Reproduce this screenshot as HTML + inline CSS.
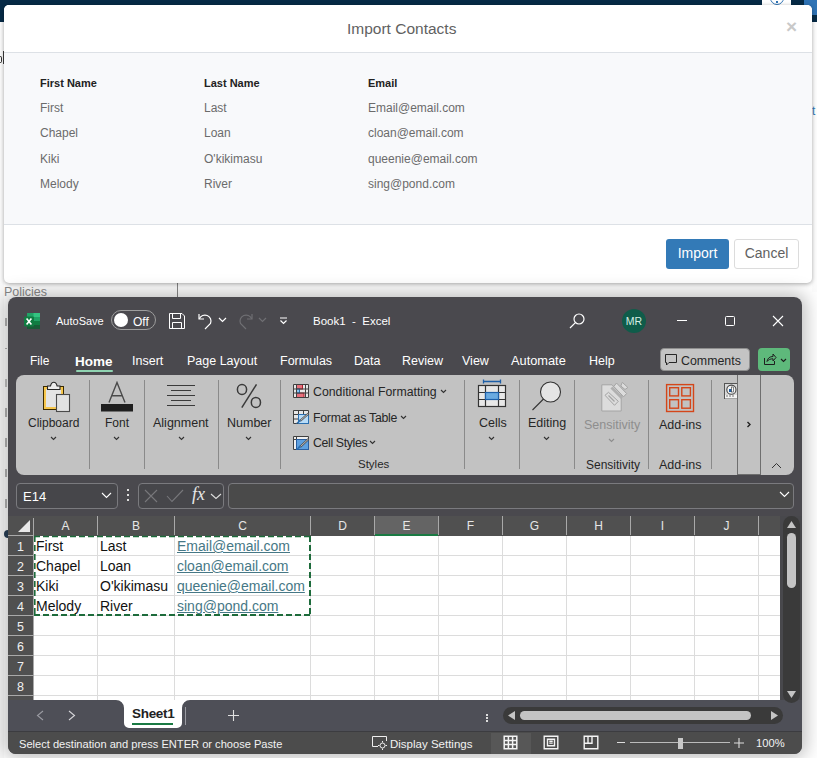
<!DOCTYPE html>
<html><head><meta charset="utf-8">
<style>
*{box-sizing:border-box;margin:0;padding:0}
html,body{width:817px;height:758px;overflow:hidden;background:#fff;font-family:"Liberation Sans",sans-serif;position:relative}
.a{position:absolute;white-space:nowrap}
/* page beneath */
#topbar{left:0;top:0;width:817px;height:22px;background:#062a46}
/* modal */
#modal{left:4px;top:5px;width:808px;height:278px;background:#fff;border-radius:5px;box-shadow:0 1px 4px rgba(0,0,0,.35);overflow:hidden}
#mhead{left:0;top:0;width:808px;height:48px;border-bottom:1px solid #dde1e6;background:#fff}
#mbody{left:0;top:48px;width:808px;height:172px;background:#f8f9fb;border-bottom:1px solid #dde1e6}
.th{font-size:11px;font-weight:bold;color:#222}
.td{font-size:12px;color:#6b6b6b}
.btn{border-radius:3px;font-size:14px;text-align:center;line-height:30px;height:30px}
/* excel */
#xl{left:8px;top:297px;width:794px;height:457px;background:#4a494e;border-radius:8px;overflow:hidden;box-shadow:0 2px 10px rgba(0,0,0,.25)}
.w{color:#fff}
.tab{font-size:12.5px;color:#fff;top:54px}
.rib{color:#262626;font-size:12px}
.sep{width:1px;background:#8a8a8a}
.chev{width:5px;height:5px;border-right:1.2px solid #333;border-bottom:1.2px solid #333;transform:rotate(45deg)}
.colh{top:219px;height:19px;background:#505050;color:#e8e8e8;font-size:12px;text-align:center;line-height:19px;border-right:1px solid #9a9a9a}
.rowh{left:0;width:25px;height:20px;background:#505050;color:#e8e8e8;font-size:12px;text-align:center;line-height:20px;border-bottom:1px solid #9a9a9a}
.cell{font-size:14px;color:#111;line-height:16px}
.lnk{color:#467886;text-decoration:underline}
</style></head><body>
<div id="topbar" class="a"></div>
<div class="a" style="left:762px;top:0;width:29px;height:5px;background:#fff"></div>
<div class="a" style="left:804px;top:0;width:13px;height:15px;background:#2f73b5"></div>
<div class="a" style="left:770px;top:-9px;width:14px;height:14px;border:1.5px solid #2f73b5;border-radius:7px"></div><div class="a" style="left:776px;top:1px;width:2px;height:2px;background:#2f73b5"></div>
<div class="a" style="left:0;top:22px;width:4px;height:736px;background:#fafafa"></div><div class="a" style="left:0;top:56px;width:2px;height:7px;border:1px solid #333;border-left:none;border-radius:0 3px 3px 0"></div>
<div class="a" style="left:812px;top:22px;width:5px;height:270px;background:#fcfcfc"></div>
<div class="a" style="left:812px;top:104px;font-size:12px;color:#337ab7">t</div>
<div class="a" style="left:5px;top:318px;width:2px;height:8px;background:#b4b4b4"></div><div class="a" style="left:5px;top:408px;width:2px;height:9px;background:#b4b4b4"></div><div class="a" style="left:5px;top:438px;width:2px;height:9px;background:#b4b4b4"></div><div class="a" style="left:5px;top:469px;width:2px;height:8px;background:#b4b4b4"></div><div class="a" style="left:5px;top:499px;width:2px;height:9px;background:#b4b4b4"></div><div class="a" style="left:5px;top:348px;width:2px;height:1px;background:#b4b4b4"></div><div class="a" style="left:5px;top:379px;width:2px;height:8px;background:#c4c4c4"></div><div class="a" style="left:4px;top:530px;width:5px;height:8px;border-radius:4px 0 0 4px;background:#2a4058"></div><div class="a" style="left:4px;top:285px;font-size:12.5px;color:#8a8a8a">Policies</div>
<div class="a" style="left:177px;top:283px;width:1px;height:15px;background:#888"></div>

<div id="modal" class="a">
  <div id="mhead" class="a">
    <div class="a" style="left:343px;top:15px;font-size:15.5px;color:#616161">Import Contacts</div>
    <div class="a" style="left:782px;top:11px;font-size:19px;font-weight:bold;color:#c9c9c9">×</div>
  </div>
  <div id="mbody" class="a">
    <div class="a th" style="left:36px;top:24px">First Name</div>
    <div class="a th" style="left:200px;top:24px">Last Name</div>
    <div class="a th" style="left:364px;top:24px">Email</div>
    <div class="a td" style="left:36px;top:48px">First</div>
    <div class="a td" style="left:200px;top:48px">Last</div>
    <div class="a td" style="left:364px;top:48px">Email@email.com</div>
    <div class="a td" style="left:36px;top:73px">Chapel</div>
    <div class="a td" style="left:200px;top:73px">Loan</div>
    <div class="a td" style="left:364px;top:73px">cloan@email.com</div>
    <div class="a td" style="left:36px;top:99px">Kiki</div>
    <div class="a td" style="left:200px;top:99px">O'kikimasu</div>
    <div class="a td" style="left:364px;top:99px">queenie@email.com</div>
    <div class="a td" style="left:36px;top:124px">Melody</div>
    <div class="a td" style="left:200px;top:124px">River</div>
    <div class="a td" style="left:364px;top:124px">sing@pond.com</div>
  </div>
  <div class="a btn" style="left:662px;top:234px;width:63px;background:#337ab7;color:#fff;line-height:28px">Import</div>
  <div class="a btn" style="left:730px;top:234px;width:65px;background:#fff;border:1px solid #dcdcdc;color:#616161;line-height:27px">Cancel</div>
</div>


<div class="a" style="left:3px;top:51px;width:1px;height:13px;background:#333"></div>
<div class="a" style="left:8px;top:297px;width:794px;height:457px;border-radius:8px;box-shadow:0 0 18px 4px rgba(0,0,0,.26)"></div>
<div id="xw" class="a" style="left:0;top:0;width:817px;height:758px;clip-path:inset(297px 15px 4px 8px round 8px);background:#4a494e">
  <!-- title bar -->
  <svg class="a" style="left:24px;top:313px" width="16" height="16" viewBox="0 0 16 16">
    <rect x="3" y="0" width="13" height="16" fill="#21a366"/>
    <rect x="9.5" y="0" width="6.5" height="4" fill="#33c481"/>
    <rect x="3" y="8" width="13" height="4" fill="#107c41"/>
    <rect x="3" y="12" width="13" height="4" fill="#185c37"/>
    <rect x="0" y="3.5" width="10" height="10" rx="1" fill="#107c41"/>
    <path d="M2.6 5.6 L7.4 11.4 M7.4 5.6 L2.6 11.4" stroke="#fff" stroke-width="1.6"/>
  </svg>
  <div class="a w" style="left:56px;top:315px;font-size:11px">AutoSave</div>
  <div class="a" style="left:111px;top:310px;width:45px;height:20px;border:1px solid #9d9d9d;border-radius:10px"></div>
  <div class="a" style="left:114px;top:313px;width:14px;height:14px;border-radius:7px;background:#fff"></div>
  <div class="a w" style="left:133px;top:315px;font-size:12px">Off</div>
  <svg class="a" style="left:169px;top:313px" width="16" height="16" viewBox="0 0 16 16" fill="none" stroke="#fff" stroke-width="1">
    <path d="M0.5 0.5 H13 L15.5 3 V15.5 H0.5 Z"/><path d="M3.5 0.5 V5.5 H11.5 V0.5"/><path d="M3.5 15.5 V9.5 H12.5 V15.5"/>
  </svg>
  <svg class="a" style="left:197px;top:312px" width="18" height="18" viewBox="0 0 18 18" fill="none" stroke="#fff" stroke-width="1.2">
    <path d="M2 2 V7 H7"/><path d="M2.3 6.8 A6 6 0 1 1 13.5 11.5 L8 17"/>
  </svg>
  <svg class="a" style="left:218px;top:317px" width="9" height="6" viewBox="0 0 9 6" fill="none" stroke="#fff" stroke-width="1.2"><path d="M1 1 L4.5 4.5 L8 1"/></svg>
  <svg class="a" style="left:236px;top:312px" width="18" height="18" viewBox="0 0 18 18" fill="none" stroke="#6f6f73" stroke-width="1.2">
    <path d="M16 2 V7 H11"/><path d="M15.7 6.8 A6 6 0 1 0 4.5 11.5 L10 17"/>
  </svg>
  <svg class="a" style="left:258px;top:317px" width="9" height="6" viewBox="0 0 9 6" fill="none" stroke="#6f6f73" stroke-width="1.2"><path d="M1 1 L4.5 4.5 L8 1"/></svg>
  <svg class="a" style="left:279px;top:317px" width="9" height="8" viewBox="0 0 9 8" fill="none" stroke="#fff" stroke-width="1.2"><path d="M1 1 H8"/><path d="M1.5 3.5 L4.5 6.5 L7.5 3.5"/></svg>
  <div class="a w" style="left:313px;top:315px;font-size:11.5px;white-space:pre">Book1  -  Excel</div>
  <svg class="a" style="left:569px;top:313px" width="16" height="16" viewBox="0 0 16 16" fill="none" stroke="#fff" stroke-width="1.2">
    <circle cx="10" cy="6" r="5"/><path d="M6.4 9.6 L1 15"/>
  </svg>
  <div class="a" style="left:622px;top:309px;width:24px;height:24px;border-radius:12px;background:#0f5c4a;color:#d6efe4;font-size:10.5px;text-align:center;line-height:24px">MR</div>
  <div class="a" style="left:677px;top:320px;width:10px;height:1px;background:#fff"></div>
  <div class="a" style="left:725px;top:316px;width:10px;height:10px;border:1px solid #fff;border-radius:1.5px"></div>
  <svg class="a" style="left:772px;top:315px" width="12" height="12" viewBox="0 0 12 12" stroke="#fff" stroke-width="1.1"><path d="M1 1 L11 11 M11 1 L1 11"/></svg>
  <!-- tabs -->
  <div class="a tab" style="left:30px;top:354px;font-size:12px">File</div>
  <div class="a tab" style="left:75px;top:354px;font-size:13.5px;font-weight:bold">Home</div>
  <div class="a" style="left:76px;top:370px;width:37px;height:2px;background:#90d4b2;border-radius:1px"></div>
  <div class="a tab" style="left:132px;top:354px;font-size:12.5px">Insert</div>
  <div class="a tab" style="left:187px;top:354px;font-size:12.5px">Page Layout</div>
  <div class="a tab" style="left:280px;top:354px;font-size:12.5px">Formulas</div>
  <div class="a tab" style="left:354px;top:354px;font-size:12.5px">Data</div>
  <div class="a tab" style="left:402px;top:354px;font-size:12.5px">Review</div>
  <div class="a tab" style="left:462px;top:354px;font-size:12.5px">View</div>
  <div class="a tab" style="left:511px;top:353px;font-size:12.8px">Automate</div>
  <div class="a tab" style="left:589px;top:354px;font-size:12.5px">Help</div>
  <div class="a" style="left:660px;top:348px;width:90px;height:23px;background:#c4c4c4;border:1px solid #8e8e8e;border-radius:4px"></div>
  <svg class="a" style="left:664px;top:353px" width="14" height="14" viewBox="0 0 14 14" fill="none" stroke="#262626" stroke-width="1"><path d="M1.5 1.5 H12.5 V9.5 H5 L2.5 12 V9.5 H1.5 Z"/></svg>
  <div class="a" style="left:681px;top:354px;font-size:12.4px;color:#262626">Comments</div>
  <div class="a" style="left:758px;top:348px;width:32px;height:23px;background:#5eb97b;border-radius:4px"></div>
  <svg class="a" style="left:763px;top:352px" width="14" height="14" viewBox="0 0 14 14" fill="none" stroke="#1e1e1e" stroke-width="1"><path d="M1.5 6 V12.5 H11.5 V9"/><path d="M4 9.5 C4.5 6 7 4.5 10 4.5 V2 L13 5.5 L10 9 V6.8 C7.5 6.8 5.5 7.5 4 9.5 Z"/></svg>
  <svg class="a" style="left:780px;top:358px" width="7" height="5" viewBox="0 0 7 5" fill="none" stroke="#1e1e1e" stroke-width="1.1"><path d="M1 1 L3.5 3.5 L6 1"/></svg>
  <!-- ribbon -->
  <div class="a" style="left:16px;top:375px;width:778px;height:100px;background:#c2c2c2;border-radius:8px"></div>
  <!-- clipboard -->
  <svg class="a" style="left:42px;top:381px" width="30" height="32" viewBox="0 0 30 32">
    <rect x="1.5" y="5.5" width="20" height="23" fill="#f6c64c" stroke="#3a2a00" stroke-width="1"/>
    <rect x="4" y="8" width="15" height="18" fill="#e4e4e4"/>
    <path d="M5.5 8.5 V5 H8.5 C9 3 10 1.3 11.8 1.3 C13.6 1.3 14.6 3 15.1 5 H18 V8.5 Z" fill="#ececec" stroke="#262626" stroke-width="1.1"/>
    <rect x="14.5" y="13.5" width="13" height="17" fill="#e2e2e2" stroke="#4a4a4a" stroke-width="1.1"/>
  </svg>
  <div class="a rib" style="left:28px;top:416px">Clipboard</div>
  <svg class="a" style="left:50px;top:436px" width="7" height="5" viewBox="0 0 7 5" fill="none" stroke="#333" stroke-width="1.1"><path d="M1 1 L3.5 3.5 L6 1"/></svg>
  <div class="a sep" style="left:89px;top:380px;height:89px"></div>
  <!-- font -->
  <svg class="a" style="left:100px;top:381px" width="34" height="31" viewBox="0 0 34 31">
    <path d="M9 21.5 L17 1.5 L25 21.5 M12.2 14.7 H21.8" fill="none" stroke="#4a4a4a" stroke-width="1.4"/>
    <rect x="1" y="23" width="32" height="7.5" fill="#1f1f1f"/>
  </svg>
  <div class="a rib" style="left:105px;top:416px">Font</div>
  <svg class="a" style="left:113px;top:436px" width="7" height="5" viewBox="0 0 7 5" fill="none" stroke="#333" stroke-width="1.1"><path d="M1 1 L3.5 3.5 L6 1"/></svg>
  <div class="a sep" style="left:144px;top:380px;height:89px"></div>
  <!-- alignment -->
  <svg class="a" style="left:166px;top:383px" width="30" height="25" viewBox="0 0 30 25" stroke="#3a3a3a" stroke-width="1">
    <path d="M1 2.5 H29 M5 7.5 H25 M1 12.5 H29 M5 17.5 H25 M1 22.5 H29"/>
  </svg>
  <div class="a rib" style="left:153px;top:416px;font-size:12.5px">Alignment</div>
  <svg class="a" style="left:178px;top:436px" width="7" height="5" viewBox="0 0 7 5" fill="none" stroke="#333" stroke-width="1.1"><path d="M1 1 L3.5 3.5 L6 1"/></svg>
  <div class="a sep" style="left:218px;top:380px;height:89px"></div>
  <!-- number -->
  <svg class="a" style="left:235px;top:383px" width="28" height="26" viewBox="0 0 28 26" fill="none" stroke="#3a3a3a" stroke-width="1.5">
    <ellipse cx="7" cy="6.5" rx="4.6" ry="5"/><ellipse cx="20.9" cy="19.4" rx="4.6" ry="5"/><path d="M21.5 1.3 L6.8 24.7"/>
  </svg>
  <div class="a rib" style="left:227px;top:416px;font-size:12.5px">Number</div>
  <svg class="a" style="left:245px;top:436px" width="7" height="5" viewBox="0 0 7 5" fill="none" stroke="#333" stroke-width="1.1"><path d="M1 1 L3.5 3.5 L6 1"/></svg>
  <div class="a sep" style="left:280px;top:380px;height:89px"></div>
  <!-- styles -->
  <svg class="a" style="left:293px;top:384px" width="16" height="14" viewBox="0 0 16 14">
    <rect x="0.5" y="0.5" width="15" height="13" fill="#e8e8e8"/>
    <rect x="3.5" y="0.5" width="6" height="4.5" fill="#e8707c" stroke="#a8202c"/>
    <rect x="3.5" y="9" width="7.5" height="4.5" fill="#e8707c" stroke="#a8202c"/>
    <rect x="3.5" y="5" width="3" height="4" fill="#8cc8f4" stroke="#2a6fb0"/>
    <path d="M0.5 0.5 H15.5 V13.5 H0.5 Z M0.5 5 H15.5 M0.5 9 H15.5 M3.5 0.5 V13.5 M12.5 0.5 V13.5" fill="none" stroke="#404040" stroke-width="1"/>
  </svg>
  <div class="a rib" style="left:313px;top:385px;font-size:12.3px">Conditional Formatting</div>
  <svg class="a" style="left:440px;top:389px" width="7" height="5" viewBox="0 0 7 5" fill="none" stroke="#333" stroke-width="1.1"><path d="M1 1 L3.5 3.5 L6 1"/></svg>
  <svg class="a" style="left:293px;top:410px" width="16" height="14" viewBox="0 0 16 14">
    <rect x="0.5" y="0.5" width="15" height="13" fill="#e8e8e8"/>
    <path d="M0.5 0.5 H15.5 V13.5 H0.5 Z M0.5 4.5 H15.5 M0.5 9 H5.5 M5.5 0.5 V13.5 M10.5 0.5 V4.5" fill="none" stroke="#404040" stroke-width="1"/>
    <rect x="5.5" y="4.5" width="10" height="9" fill="#b8dcf8" stroke="#2a6fb0"/>
    <path d="M15.5 3.5 L7 11" stroke="#505050" stroke-width="2.2"/>
    <path d="M15.2 3.8 L7.3 10.7" stroke="#d8d8d8" stroke-width="0.8"/>
    <path d="M2.5 13.5 C4 13.5 6.5 13 8 10.5 L6.5 9.5 C5 10.5 5 12.5 2.5 13.5 Z" fill="#2a6fb0"/>
  </svg>
  <div class="a rib" style="left:313px;top:411px;font-size:12.3px;letter-spacing:-0.25px">Format as Table</div>
  <svg class="a" style="left:400px;top:415px" width="7" height="5" viewBox="0 0 7 5" fill="none" stroke="#333" stroke-width="1.1"><path d="M1 1 L3.5 3.5 L6 1"/></svg>
  <svg class="a" style="left:293px;top:436px" width="16" height="14" viewBox="0 0 16 14">
    <rect x="0.5" y="0.5" width="15" height="13" fill="#f0f0f0"/>
    <path d="M0.5 0.5 H15.5 V13.5 H0.5 Z M0.5 3.5 H15.5 M3.5 0.5 V13.5" fill="none" stroke="#404040" stroke-width="1"/>
    <rect x="3.5" y="3.5" width="12" height="10" fill="#5ea0e0" stroke="#2a5fa0"/>
    <path d="M15.5 3 L7 11" stroke="#505050" stroke-width="2.2"/>
    <path d="M15.2 3.3 L7.3 10.7" stroke="#d8d8d8" stroke-width="0.8"/>
    <path d="M2.5 13.5 C4 13.5 6.5 13 8 10.5 L6.5 9.5 C5 10.5 5 12.5 2.5 13.5 Z" fill="#2a6fb0"/>
  </svg>
  <div class="a rib" style="left:313px;top:436px;font-size:12.3px;letter-spacing:-0.35px">Cell Styles</div>
  <svg class="a" style="left:369px;top:440px" width="7" height="5" viewBox="0 0 7 5" fill="none" stroke="#333" stroke-width="1.1"><path d="M1 1 L3.5 3.5 L6 1"/></svg>
  <div class="a rib" style="left:358px;top:458px;font-size:11.5px">Styles</div>
  <div class="a sep" style="left:464px;top:380px;height:89px"></div>
  <!-- cells -->
  <svg class="a" style="left:477px;top:378px" width="30" height="30" viewBox="0 0 30 30">
    <path d="M6.5 3.5 H23.5 M6.5 1.5 V5.5 M23.5 1.5 V5.5" stroke="#1d5fa8" stroke-width="1.3"/>
    <rect x="1.5" y="7.5" width="27" height="21" fill="#e8e8e8" stroke="#333" stroke-width="1.2"/>
    <path d="M1.5 14.5 H28.5 M1.5 21.5 H28.5 M8.5 7.5 V28.5 M21.5 7.5 V28.5" stroke="#333" stroke-width="1.2"/>
    <rect x="8.5" y="14.5" width="13" height="7" fill="#6aaae0" stroke="#1d5fa8" stroke-width="1.2"/>
  </svg>
  <div class="a rib" style="left:479px;top:416px;font-size:12.5px">Cells</div>
  <svg class="a" style="left:488px;top:436px" width="7" height="5" viewBox="0 0 7 5" fill="none" stroke="#333" stroke-width="1.1"><path d="M1 1 L3.5 3.5 L6 1"/></svg>
  <div class="a sep" style="left:519px;top:380px;height:89px"></div>
  <!-- editing -->
  <svg class="a" style="left:531px;top:381px" width="32" height="31" viewBox="0 0 32 31">
    <circle cx="19.5" cy="11" r="10" fill="#e4e4e4" stroke="#333" stroke-width="1.1"/>
    <path d="M12.5 18 L1.5 29" stroke="#333" stroke-width="1.1"/>
  </svg>
  <div class="a rib" style="left:528px;top:416px;font-size:12.5px">Editing</div>
  <svg class="a" style="left:543px;top:436px" width="7" height="5" viewBox="0 0 7 5" fill="none" stroke="#333" stroke-width="1.1"><path d="M1 1 L3.5 3.5 L6 1"/></svg>
  <div class="a sep" style="left:574px;top:380px;height:89px"></div>
  <!-- sensitivity -->
  <svg class="a" style="left:595px;top:378px" width="40" height="38" viewBox="0 0 40 38">
    <path d="M6.8 6.8 H17 L26.2 16 V33 H6.8 Z" fill="#dcdcdc" stroke="#a4a4a4" stroke-width="1"/>
    <path d="M16.5 9.5 L27 20" stroke="#b0b0b0" stroke-width="3"/>
    <path d="M21.5 5 L31.6 15.5 L28.6 18.8 L18.8 8.5 Z" fill="#dcdcdc" stroke="#a4a4a4" stroke-width="1"/>
    <path d="M27.3 4.3 L32.8 9.5 L30 11.5 L25.8 8 Z" fill="#dcdcdc" stroke="#a4a4a4" stroke-width="1"/>
    <path d="M13.5 14.3 L23.3 23.3 L19.5 27.3 L10 17.3 Z" fill="#dcdcdc" stroke="#a4a4a4" stroke-width="1"/>
    <path d="M13.5 17.5 L19.5 23.5" stroke="#a4a4a4" stroke-width="1.2"/>
  </svg>
  <div class="a rib" style="left:584px;top:418px;color:#8e8e8e;font-size:12.5px">Sensitivity</div>
  <svg class="a" style="left:608px;top:438px" width="7" height="5" viewBox="0 0 7 5" fill="none" stroke="#8e8e8e" stroke-width="1.1"><path d="M1 1 L3.5 3.5 L6 1"/></svg>
  <div class="a rib" style="left:586px;top:458px;font-size:12px">Sensitivity</div>
  <div class="a sep" style="left:648px;top:380px;height:89px"></div>
  <!-- addins -->
  <svg class="a" style="left:665px;top:383px" width="30" height="30" viewBox="0 0 30 30" fill="none" stroke="#d4461a" stroke-width="1.4">
    <rect x="1.6" y="1.6" width="26.9" height="26.9"/><rect x="4.7" y="4.7" width="8.8" height="8.2"/><rect x="16.8" y="4.7" width="8.6" height="8.2"/><rect x="4.7" y="16.7" width="8.8" height="8.5"/><rect x="16.8" y="16.7" width="8.6" height="8.5"/>
  </svg>
  <div class="a rib" style="left:659px;top:418px;font-size:12.5px">Add-ins</div>
  <div class="a rib" style="left:659px;top:458px;font-size:12.5px">Add-ins</div>
  <div class="a sep" style="left:711px;top:380px;height:89px"></div>
  <svg class="a" style="left:724px;top:383px" width="14" height="16" viewBox="0 0 14 16">
    <rect x="0.5" y="0.5" width="13" height="15" fill="#d8d8d8" stroke="#555"/>
    <rect x="1" y="12" width="12" height="3.5" fill="#f4f4f4"/>
    <path d="M3 12 V14 M6 12 V14 M9 12 V14" stroke="#555" stroke-width="0.8"/>
    <circle cx="7.4" cy="6.7" r="4.6" fill="#f4f4f4" stroke="#444" stroke-width="1.1"/>
    <rect x="5" y="6" width="3" height="3" fill="#1d5fa8"/><rect x="7.5" y="4" width="2" height="5" fill="#fff" stroke="#333" stroke-width="0.6"/>
  </svg>
  <div class="a" style="left:737px;top:375px;width:24px;height:100px;border:1px solid #6e6e6e;border-top:none;background:#c2c2c2"></div>
  <svg class="a" style="left:746px;top:421px" width="6" height="7" viewBox="0 0 6 7" fill="none" stroke="#222" stroke-width="1.4"><path d="M1.5 1 L4 3.5 L1.5 6"/></svg>

  <!-- formula bar -->
  <div class="a" style="left:16px;top:483px;width:102px;height:26px;border:1px solid #7a7a7e;border-radius:4px;background:#46464a"></div>
  <div class="a w" style="left:23px;top:489px;font-size:13px">E14</div>
  <svg class="a" style="left:101px;top:492px" width="11" height="7" viewBox="0 0 11 7" fill="none" stroke="#fff" stroke-width="1.1"><path d="M1 1 L5.5 5.5 L10 1"/></svg>
  <div class="a" style="left:127px;top:489px;width:2px;height:2px;background:#ddd"></div>
  <div class="a" style="left:127px;top:494px;width:2px;height:2px;background:#ddd"></div>
  <div class="a" style="left:127px;top:499px;width:2px;height:2px;background:#ddd"></div>
  <div class="a" style="left:138px;top:483px;width:86px;height:26px;border:1px solid #7a7a7e;border-radius:4px;background:#46464a"></div>
  <svg class="a" style="left:144px;top:489px" width="14" height="14" viewBox="0 0 14 14" stroke="#77777b" stroke-width="1.1"><path d="M1 1 L13 13 M13 1 L1 13"/></svg>
  <svg class="a" style="left:166px;top:489px" width="18" height="14" viewBox="0 0 18 14" fill="none" stroke="#77777b" stroke-width="1.1"><path d="M1 7 L6 12.5 L17 1"/></svg>
  <div class="a" style="left:192px;top:484px;font-family:'Liberation Serif',serif;font-style:italic;font-size:18px;color:#e8e8e8">fx</div>
  <svg class="a" style="left:210px;top:493px" width="12" height="7" viewBox="0 0 12 7" fill="none" stroke="#ddd" stroke-width="1.1"><path d="M1 1 L6 5.5 L11 1"/></svg>
  <div class="a" style="left:228px;top:483px;width:566px;height:26px;border:1px solid #7a7a7e;border-radius:4px;background:#4a4a4a"></div>
  <svg class="a" style="left:779px;top:491px" width="11" height="7" viewBox="0 0 11 7" fill="none" stroke="#fff" stroke-width="1.1"><path d="M1 1 L5.5 5.5 L10 1"/></svg>
  <!-- grid -->
  <div class="a" style="left:8px;top:516px;width:772px;height:20px;background:#505050"></div>
  <div class="a" style="left:8px;top:536px;width:26px;height:164px;background:#505050"></div>
  <div class="a" style="left:34px;top:536px;width:746px;height:164px;background:#fff"></div>
  <div class="a" style="left:97px;top:536px;width:1px;height:164px;background:#dcdcdc"></div>
  <div class="a" style="left:97px;top:516px;width:1px;height:19px;background:#a9a9a9"></div>
  <div class="a" style="left:174px;top:536px;width:1px;height:164px;background:#dcdcdc"></div>
  <div class="a" style="left:174px;top:516px;width:1px;height:19px;background:#a9a9a9"></div>
  <div class="a" style="left:310px;top:536px;width:1px;height:164px;background:#dcdcdc"></div>
  <div class="a" style="left:310px;top:516px;width:1px;height:19px;background:#a9a9a9"></div>
  <div class="a" style="left:374px;top:536px;width:1px;height:164px;background:#dcdcdc"></div>
  <div class="a" style="left:374px;top:516px;width:1px;height:19px;background:#a9a9a9"></div>
  <div class="a" style="left:438px;top:536px;width:1px;height:164px;background:#dcdcdc"></div>
  <div class="a" style="left:438px;top:516px;width:1px;height:19px;background:#a9a9a9"></div>
  <div class="a" style="left:502px;top:536px;width:1px;height:164px;background:#dcdcdc"></div>
  <div class="a" style="left:502px;top:516px;width:1px;height:19px;background:#a9a9a9"></div>
  <div class="a" style="left:566px;top:536px;width:1px;height:164px;background:#dcdcdc"></div>
  <div class="a" style="left:566px;top:516px;width:1px;height:19px;background:#a9a9a9"></div>
  <div class="a" style="left:630px;top:536px;width:1px;height:164px;background:#dcdcdc"></div>
  <div class="a" style="left:630px;top:516px;width:1px;height:19px;background:#a9a9a9"></div>
  <div class="a" style="left:694px;top:536px;width:1px;height:164px;background:#dcdcdc"></div>
  <div class="a" style="left:694px;top:516px;width:1px;height:19px;background:#a9a9a9"></div>
  <div class="a" style="left:758px;top:536px;width:1px;height:164px;background:#dcdcdc"></div>
  <div class="a" style="left:758px;top:516px;width:1px;height:19px;background:#a9a9a9"></div>
  <div class="a" style="left:34px;top:555px;width:746px;height:1px;background:#dcdcdc"></div>
  <div class="a" style="left:8px;top:555px;width:25px;height:1px;background:#a9a9a9"></div>
  <div class="a" style="left:34px;top:575px;width:746px;height:1px;background:#dcdcdc"></div>
  <div class="a" style="left:8px;top:575px;width:25px;height:1px;background:#a9a9a9"></div>
  <div class="a" style="left:34px;top:595px;width:746px;height:1px;background:#dcdcdc"></div>
  <div class="a" style="left:8px;top:595px;width:25px;height:1px;background:#a9a9a9"></div>
  <div class="a" style="left:34px;top:615px;width:746px;height:1px;background:#dcdcdc"></div>
  <div class="a" style="left:8px;top:615px;width:25px;height:1px;background:#a9a9a9"></div>
  <div class="a" style="left:34px;top:635px;width:746px;height:1px;background:#dcdcdc"></div>
  <div class="a" style="left:8px;top:635px;width:25px;height:1px;background:#a9a9a9"></div>
  <div class="a" style="left:34px;top:655px;width:746px;height:1px;background:#dcdcdc"></div>
  <div class="a" style="left:8px;top:655px;width:25px;height:1px;background:#a9a9a9"></div>
  <div class="a" style="left:34px;top:675px;width:746px;height:1px;background:#dcdcdc"></div>
  <div class="a" style="left:8px;top:675px;width:25px;height:1px;background:#a9a9a9"></div>
  <div class="a" style="left:34px;top:695px;width:746px;height:1px;background:#dcdcdc"></div>
  <div class="a" style="left:8px;top:695px;width:25px;height:1px;background:#a9a9a9"></div>
  <div class="a" style="left:8px;top:535px;width:25px;height:1px;background:#a9a9a9"></div>
  <div class="a" style="left:33px;top:518px;width:1px;height:182px;background:#a9a9a9"></div>
  <div class="a" style="left:375px;top:516px;width:63px;height:18px;background:#646464"></div>
  <div class="a" style="left:375px;top:534px;width:63px;height:2px;background:#1a7a43"></div>
  <div class="a" style="left:34px;top:519px;width:63px;text-align:center;font-size:12px;color:#e6e6e6">A</div>
  <div class="a" style="left:98px;top:519px;width:76px;text-align:center;font-size:12px;color:#e6e6e6">B</div>
  <div class="a" style="left:175px;top:519px;width:135px;text-align:center;font-size:12px;color:#e6e6e6">C</div>
  <div class="a" style="left:311px;top:519px;width:63px;text-align:center;font-size:12px;color:#e6e6e6">D</div>
  <div class="a" style="left:375px;top:519px;width:63px;text-align:center;font-size:12px;color:#e6e6e6">E</div>
  <div class="a" style="left:439px;top:519px;width:63px;text-align:center;font-size:12px;color:#e6e6e6">F</div>
  <div class="a" style="left:503px;top:519px;width:63px;text-align:center;font-size:12px;color:#e6e6e6">G</div>
  <div class="a" style="left:567px;top:519px;width:63px;text-align:center;font-size:12px;color:#e6e6e6">H</div>
  <div class="a" style="left:631px;top:519px;width:63px;text-align:center;font-size:12px;color:#e6e6e6">I</div>
  <div class="a" style="left:695px;top:519px;width:63px;text-align:center;font-size:12px;color:#e6e6e6">J</div>
  <div class="a" style="left:8px;top:540px;width:25px;text-align:center;font-size:12.5px;color:#f0f0f0">1</div>
  <div class="a" style="left:8px;top:560px;width:25px;text-align:center;font-size:12.5px;color:#f0f0f0">2</div>
  <div class="a" style="left:8px;top:580px;width:25px;text-align:center;font-size:12.5px;color:#f0f0f0">3</div>
  <div class="a" style="left:8px;top:600px;width:25px;text-align:center;font-size:12.5px;color:#f0f0f0">4</div>
  <div class="a" style="left:8px;top:620px;width:25px;text-align:center;font-size:12.5px;color:#f0f0f0">5</div>
  <div class="a" style="left:8px;top:640px;width:25px;text-align:center;font-size:12.5px;color:#f0f0f0">6</div>
  <div class="a" style="left:8px;top:660px;width:25px;text-align:center;font-size:12.5px;color:#f0f0f0">7</div>
  <div class="a" style="left:8px;top:680px;width:25px;text-align:center;font-size:12.5px;color:#f0f0f0">8</div>
  <svg class="a" style="left:17px;top:519px" width="14" height="14" viewBox="0 0 14 14"><path d="M13 1 V13 H1 Z" fill="#e8e8e8"/></svg>
  <div class="a cell" style="left:36px;top:538px">First</div>
  <div class="a cell" style="left:100px;top:538px">Last</div>
  <div class="a cell lnk" style="left:177px;top:538px">Email@email.com</div>
  <div class="a cell" style="left:36px;top:558px">Chapel</div>
  <div class="a cell" style="left:100px;top:558px">Loan</div>
  <div class="a cell lnk" style="left:177px;top:558px">cloan@email.com</div>
  <div class="a cell" style="left:36px;top:578px">Kiki</div>
  <div class="a cell" style="left:100px;top:578px">O'kikimasu</div>
  <div class="a cell lnk" style="left:177px;top:578px">queenie@email.com</div>
  <div class="a cell" style="left:36px;top:598px">Melody</div>
  <div class="a cell" style="left:100px;top:598px">River</div>
  <div class="a cell lnk" style="left:177px;top:598px">sing@pond.com</div>
  <svg class="a" style="left:33px;top:535px" width="279" height="82" viewBox="0 0 279 82"><g fill="none" stroke="#1d6b3b" stroke-dasharray="6 3"><path d="M1 1.5 H278" stroke-width="1.6"/><path d="M1.8 1 V81" stroke-width="1.6"/><path d="M277 1 V81" stroke-width="2"/><path d="M1 80 H278" stroke-width="2"/></g></svg>

  <!-- sheet tab bar -->
  <div class="a" style="left:780px;top:516px;width:22px;height:184px;background:#48484c"></div><div class="a" style="left:8px;top:700px;width:794px;height:32px;background:#4e4f57"></div>
  <div class="a" style="left:8px;top:695px;width:25px;height:5px;background:#505050"></div>
  <div class="a" style="left:8px;top:695px;width:25px;height:1px;background:#a9a9a9"></div>
  <!-- vscroll -->
    <div class="a" style="left:783px;top:516px;width:17px;height:187px;border-radius:8.5px;background:#3a3a3a"></div>
  <svg class="a" style="left:786px;top:520px" width="11" height="9" viewBox="0 0 11 9"><path d="M1 8 L5.5 1 L10 8 Z" fill="#c4c4c4"/></svg>
  <div class="a" style="left:787px;top:533px;width:9px;height:55px;border-radius:4.5px;background:#c4c4c4"></div>
  <svg class="a" style="left:786px;top:690px" width="11" height="9" viewBox="0 0 11 9"><path d="M1 1 L5.5 8 L10 1 Z" fill="#c4c4c4"/></svg>
  <svg class="a" style="left:36px;top:710px" width="8" height="11" viewBox="0 0 8 11" fill="none" stroke="#9a9ba2" stroke-width="1.1"><path d="M7 1 L1.5 5.5 L7 10"/></svg>
  <svg class="a" style="left:68px;top:710px" width="8" height="11" viewBox="0 0 8 11" fill="none" stroke="#d4d4d8" stroke-width="1.1"><path d="M1 1 L6.5 5.5 L1 10"/></svg>
  <svg class="a" style="left:116px;top:700px" width="74" height="29" viewBox="0 0 74 29">
    <path d="M0 0 H74 A8 8 0 0 0 66 8 V23 A5 5 0 0 1 61 28 H13 A5 5 0 0 1 8 23 V8 A8 8 0 0 0 0 0 Z" fill="#fff"/>
  </svg>
  <div class="a" style="left:132px;top:706px;font-size:13.5px;font-weight:bold;color:#222;letter-spacing:-0.3px">Sheet1</div>
  <div class="a" style="left:132px;top:723px;width:41px;height:2px;background:#1a7a43"></div>
  <div class="a" style="left:185px;top:707px;width:1px;height:18px;background:#9a9ba2"></div>
  <svg class="a" style="left:228px;top:710px" width="11" height="11" viewBox="0 0 11 11" stroke="#e0e0e0" stroke-width="1.1"><path d="M5.5 0 V11 M0 5.5 H11"/></svg>
  <div class="a" style="left:486px;top:714px;width:2px;height:2px;background:#ddd"></div>
  <div class="a" style="left:486px;top:717px;width:2px;height:2px;background:#ddd"></div>
  <div class="a" style="left:486px;top:720px;width:2px;height:2px;background:#ddd"></div>
  <div class="a" style="left:503px;top:707px;width:280px;height:17px;border-radius:8.5px;background:#3a3a3a"></div>
  <svg class="a" style="left:507px;top:710px" width="9" height="11" viewBox="0 0 9 11"><path d="M8 1 L1 5.5 L8 10 Z" fill="#c4c4c4"/></svg>
  <div class="a" style="left:520px;top:711px;width:231px;height:9px;border-radius:4.5px;background:#c4c4c4"></div>
  <svg class="a" style="left:770px;top:710px" width="9" height="11" viewBox="0 0 9 11"><path d="M1 1 L8 5.5 L1 10 Z" fill="#c4c4c4"/></svg>
  <!-- status bar -->
  <div class="a" style="left:8px;top:732px;width:794px;height:22px;background:#4c4c4c"></div><div class="a" style="left:8px;top:731px;width:794px;height:1px;background:#3c3c40"></div>
  <div class="a w" style="left:19px;top:738px;font-size:11.1px;color:#f2f2f2">Select destination and press ENTER or choose Paste</div>
  <svg class="a" style="left:372px;top:736px" width="16" height="14" viewBox="0 0 16 14" fill="none" stroke="#eee" stroke-width="1"><path d="M6 10.5 H0.5 V0.5 H14.5 V5"/><circle cx="10.5" cy="9.5" r="2.5"/><path d="M10.5 5 V6.5 M10.5 12.5 V14 M6 9.5 H7.5 M13.5 9.5 H15"/></svg>
  <div class="a w" style="left:390px;top:738px;font-size:11.5px;color:#f2f2f2">Display Settings</div>
  <div class="a" style="left:491px;top:733px;width:40px;height:21px;background:#575757"></div>
  <svg class="a" style="left:503px;top:735px" width="15" height="15" viewBox="0 0 15 15" fill="none" stroke="#f4f4f4" stroke-width="1.5"><path d="M1.2 1.2 H13.8 V13.8 H1.2 Z M5.4 1.2 V13.8 M9.6 1.2 V13.8 M1.2 5.4 H13.8 M1.2 9.6 H13.8"/></svg>
  <svg class="a" style="left:543px;top:735px" width="16" height="15" viewBox="0 0 16 15" fill="none" stroke="#f4f4f4" stroke-width="1.4"><path d="M1.2 1.2 H14.8 V13.8 H1.2 Z M4.5 4.3 H11.5 V10.8 H4.5 Z M6.3 6.3 H9.7 M6.3 8.1 H9.7"/></svg>
  <svg class="a" style="left:583px;top:735px" width="16" height="15" viewBox="0 0 16 15" fill="none" stroke="#f4f4f4" stroke-width="1.4"><path d="M1.2 1.2 H14.8 V13.8 H1.2 Z M1.2 8.3 H9 V1.2 M5 1.2 V8.3"/></svg>
  <div class="a" style="left:617px;top:742px;width:8px;height:1px;background:#ddd"></div>
  <div class="a" style="left:630px;top:742px;width:100px;height:1px;background:#bbb"></div>
  <div class="a" style="left:678px;top:738px;width:5px;height:11px;background:#c8c8c8"></div>
  <svg class="a" style="left:734px;top:738px" width="10" height="10" viewBox="0 0 10 10" stroke="#ddd" stroke-width="1.1"><path d="M5 0 V10 M0 5 H10"/></svg>
  <div class="a w" style="left:756px;top:737px;font-size:11.2px;color:#f2f2f2">100%</div>
  <svg class="a" style="left:771px;top:462px" width="11" height="7" viewBox="0 0 11 7" fill="none" stroke="#333" stroke-width="1"><path d="M1 6 L5.5 1.5 L10 6"/></svg>
</div>

</body></html>
